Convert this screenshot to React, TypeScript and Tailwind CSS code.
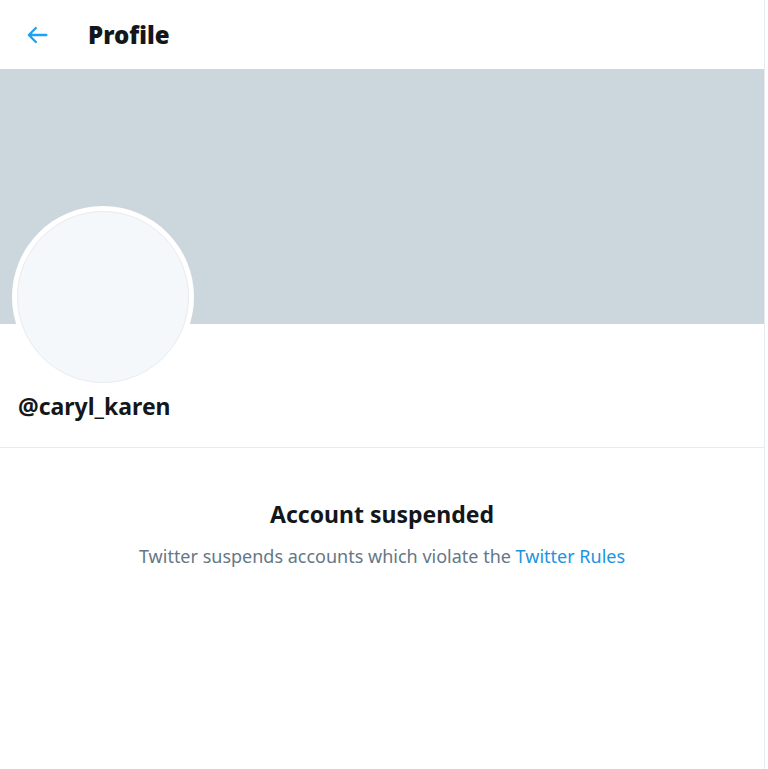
import React from "react";

export default function App() {
  return (
    <div className="w-[768px] h-[769px] bg-white overflow-hidden" style={{ fontFamily: '"Noto Sans", "Open Sans", sans-serif' }}>
      <div className="w-[765px] h-full border-r border-[#e6ecf0] flex flex-col">
        <div className="h-[69px] flex items-center pl-[23px] shrink-0">
          <svg viewBox="0 0 24 24" className="w-[28px] h-[28px]" fill="#1da1f2">
            <path d="M20 11H7.414l4.293-4.293a1 1 0 0 0-1.414-1.414l-6 6a1 1 0 0 0 0 1.414l6 6a.996.996 0 0 0 1.414 0 1 1 0 0 0 0-1.414L7.414 13H20a1 1 0 1 0 0-2z" />
          </svg>
          <div className="ml-[37px] text-[24px] font-black text-[#14171a] leading-none">Profile</div>
        </div>
        <div className="h-[255px] bg-[#ccd6dd] shrink-0" />
        <div className="relative h-[124px] border-b border-[#e6ecf0] shrink-0">
          <div className="absolute left-[12px] top-[-118px] w-[182px] h-[182px] rounded-full bg-white p-[5px]">
            <div className="w-full h-full rounded-full bg-[#f5f8fa] border border-[#e6ecf0]" />
          </div>
          <div className="absolute left-[18px] top-[71px] text-[23px] font-bold text-[#14171a] leading-none">@caryl_karen</div>
        </div>
        <div className="flex flex-col items-center pt-[55px]">
          <div className="text-[23px] font-bold text-[#14171a] leading-none">Account suspended</div>
          <div className="mt-[21px] text-[18px] text-[#657786] leading-none">
            Twitter suspends accounts which violate the <span className="text-[#1b95e0]">Twitter Rules</span>
          </div>
        </div>
      </div>
    </div>
  );
}
